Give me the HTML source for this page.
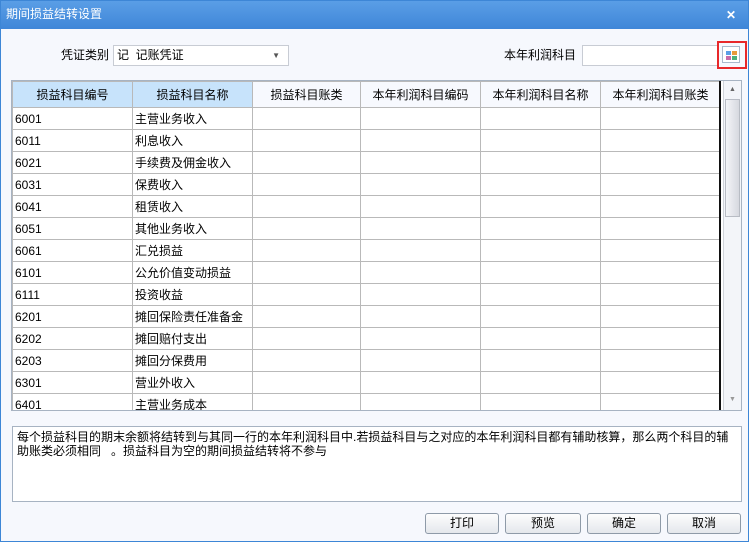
<!DOCTYPE html><html><head><meta charset="utf-8"><style>
*{margin:0;padding:0;box-sizing:border-box}
body{width:749px;height:542px;overflow:hidden;font-family:"Liberation Sans","Noto Sans CJK SC",sans-serif;font-size:12px;color:#000;background:#fff}
.win{position:absolute;left:0;top:0;width:749px;height:542px;border:1px solid #3d86d6;background:#f6f8fd}
.title{position:absolute;left:0;top:0;width:747px;height:28px;background:linear-gradient(#5a9ee6,#3f86d8);color:#fff;font-size:12px;line-height:26px;padding-left:5px}
.x{position:absolute;right:12px;top:0;color:#fff;font-size:12px;font-weight:bold;line-height:28px}
.abs{position:absolute}
.inp{position:absolute;background:#fff;border:1px solid #c8ccd4;height:21px}
table{border-collapse:collapse;table-layout:fixed}
td{border:1px solid #b9b9b9;height:22px;padding-left:2px;font-size:12px;white-space:nowrap;overflow:hidden;background:#fff}
th{height:26px;font-weight:normal;font-size:12px;border:1px solid #b9b9b9;background:#f7f9fe}
th.b{background:#c7e3fb}
.btn{position:absolute;top:512px;height:21px;border:1px solid #8e9aa8;border-radius:3px;background:linear-gradient(#fdfdfd,#e4e7ec);text-align:center;line-height:19px}
</style></head><body><div class="win">
<div class="title">期间损益结转设置<span class="x">✕</span></div>
<div class="abs" style="left:60px;top:45px">凭证类别</div>
<div class="inp" style="left:112px;top:44px;width:176px;padding-left:3px;line-height:19px">记&nbsp;&nbsp;记账凭证<span style="position:absolute;right:8px;top:0;font-size:8px;color:#555">▼</span></div>
<div class="abs" style="left:503px;top:45px">本年利润科目</div>
<div class="inp" style="left:581px;top:44px;width:136px"></div>
<div class="abs" style="left:716px;top:40px;width:30px;height:28px;border:2px solid #e8282a"></div>
<div class="abs" style="left:721px;top:45px;width:18px;height:17px;border:1px solid #a9b9cc;background:#fff">
<div class="abs" style="left:3px;top:4px;width:5px;height:4px;background:#5a9ee6"></div><div class="abs" style="left:9px;top:4px;width:5px;height:4px;background:#e89a3a"></div>
<div class="abs" style="left:3px;top:9px;width:5px;height:4px;background:#c86aa8"></div><div class="abs" style="left:9px;top:9px;width:5px;height:4px;background:#4db07a"></div></div>
<div class="abs" style="left:10px;top:79px;width:731px;height:331px;border:1px solid #a7b3c2;background:#fff;overflow:hidden">
<table style="width:708px"><colgroup><col style="width:120px"><col style="width:120px"><col style="width:108px"><col style="width:120px"><col style="width:120px"><col style="width:120px"></colgroup>
<tr><th class="b">损益科目编号</th><th class="b">损益科目名称</th><th>损益科目账类</th><th>本年利润科目编码</th><th>本年利润科目名称</th><th>本年利润科目账类</th></tr>
<tr><td>6001</td><td>主营业务收入</td><td></td><td></td><td></td><td></td></tr>
<tr><td>6011</td><td>利息收入</td><td></td><td></td><td></td><td></td></tr>
<tr><td>6021</td><td>手续费及佣金收入</td><td></td><td></td><td></td><td></td></tr>
<tr><td>6031</td><td>保费收入</td><td></td><td></td><td></td><td></td></tr>
<tr><td>6041</td><td>租赁收入</td><td></td><td></td><td></td><td></td></tr>
<tr><td>6051</td><td>其他业务收入</td><td></td><td></td><td></td><td></td></tr>
<tr><td>6061</td><td>汇兑损益</td><td></td><td></td><td></td><td></td></tr>
<tr><td>6101</td><td>公允价值变动损益</td><td></td><td></td><td></td><td></td></tr>
<tr><td>6111</td><td>投资收益</td><td></td><td></td><td></td><td></td></tr>
<tr><td>6201</td><td>摊回保险责任准备金</td><td></td><td></td><td></td><td></td></tr>
<tr><td>6202</td><td>摊回赔付支出</td><td></td><td></td><td></td><td></td></tr>
<tr><td>6203</td><td>摊回分保费用</td><td></td><td></td><td></td><td></td></tr>
<tr><td>6301</td><td>营业外收入</td><td></td><td></td><td></td><td></td></tr>
<tr><td>6401</td><td>主营业务成本</td><td></td><td></td><td></td><td></td></tr>
</table>
<div class="abs" style="left:707px;top:0;width:2px;height:331px;background:#111"></div>
<div class="abs" style="left:711px;top:0;width:18px;height:331px;background:#f3f5f9;border-left:1px solid #d0d4da">
<div class="abs" style="left:1px;top:1px;width:15px;height:16px;font-size:7px;color:#666;text-align:center;line-height:16px">▲</div>
<div class="abs" style="left:1px;top:18px;width:15px;height:118px;border:1px solid #b8bcc4;background:linear-gradient(90deg,#f4f5f8,#d6d8df)"></div>
<div class="abs" style="left:1px;top:311px;width:15px;height:16px;font-size:7px;color:#999;text-align:center;line-height:16px">▼</div></div>
</div>
<div class="abs" style="left:11px;top:425px;width:730px;height:76px;border:1px solid #a7b3c2;background:#fff;padding:3px 4px;line-height:14px;font-size:12px">每个损益科目的期末余额将结转到与其同一行的本年利润科目中.若损益科目与之对应的本年利润科目都有辅助核算，那么两个科目的辅助账类必须相同&nbsp;&nbsp;&nbsp;。损益科目为空的期间损益结转将不参与</div>
<div class="btn" style="left:424px;width:74px">打印</div>
<div class="btn" style="left:504px;width:76px">预览</div>
<div class="btn" style="left:586px;width:74px">确定</div>
<div class="btn" style="left:666px;width:74px">取消</div>
</div></body></html>
